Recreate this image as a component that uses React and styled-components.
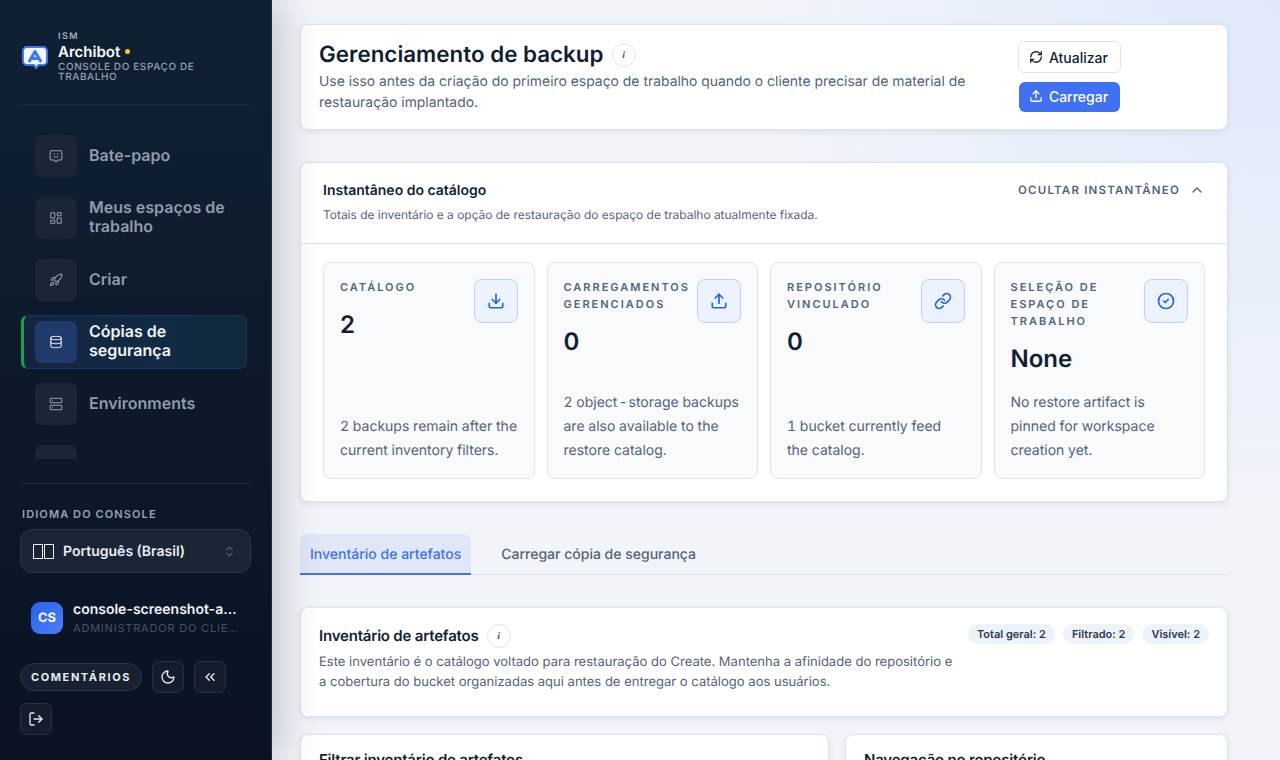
import styled, { createGlobalStyle } from "styled-components";
import {
  LayoutDashboard,
  Rocket,
  Database,
  Server,
  ChevronsUpDown,
  ChevronsLeft,
  ChevronUp,
  Moon,
  LogOut,
  RefreshCw,
  Upload,
  Download,
  Link,
  CircleCheck,
} from "lucide-react";

const GlobalStyle = createGlobalStyle`
  html, body {
    margin: 0;
    height: 100%;
    overflow: hidden;
    font-family: Inter, "Liberation Sans", sans-serif;
    text-rendering: geometricPrecision;
  }
  * { box-sizing: border-box; }
`;

const ChatIcon = () => (
  <svg width="14" height="14" viewBox="0 0 24 24" fill="none" stroke="currentColor" strokeWidth="1.75" strokeLinecap="round" strokeLinejoin="round">
    <path d="M4 3h16a2 2 0 0 1 2 2v12a2 2 0 0 1-2 2h-5l-3 3-3-3H4a2 2 0 0 1-2-2V5a2 2 0 0 1 2-2z" />
    <path d="M9 8v1M15 8v1M9 13c1.500 1.200 4.500 1.200 6 0" />
  </svg>
);

const NAV = [
  { label: "Bate-papo", icon: ChatIcon },
  { label: "Meus espaços de trabalho", icon: LayoutDashboard },
  { label: "Criar", icon: Rocket },
  { label: "Cópias de segurança", icon: Database, active: true },
  { label: "Environments", icon: Server },
  { label: "Observabilidade", icon: Server },
];

const Hyphen = styled.span`
  margin: 0 1px;
`;

const STATS = [
  { label: "Catálogo", value: "2", text: "2 backups remain after the current inventory filters.", icon: Download },
  {
    label: "Carregamentos gerenciados",
    value: "0",
    text: (
      <>
        2 object<Hyphen>-</Hyphen>storage backups are also available to the restore catalog.
      </>
    ),
    icon: Upload,
  },
  { label: "Repositório vinculado", value: "0", text: "1 bucket currently feed the catalog.", icon: Link },
  { label: "Seleção de espaço de trabalho", value: "None", text: "No restore artifact is pinned for workspace creation yet.", icon: CircleCheck },
];

const Logo = () => (
  <svg width="28" height="26" viewBox="0 0 28 26">
    <path d="M6 3h16a4 4 0 0 1 4 4v10a4 4 0 0 1-4 4h-4.500l-2.500 3-2-3H6a4 4 0 0 1-4-4V7a4 4 0 0 1 4-4z" fill="#f2f6ff" stroke="#3f78f6" strokeWidth="2" />
    <path d="M8.500 17 14 7.500l5.500 9.500M10.500 14.500h7" fill="none" stroke="#3f78f6" strokeWidth="3" strokeLinecap="round" strokeLinejoin="round" />
  </svg>
);

export default function App() {
  return (
    <Shell>
      <GlobalStyle />
      <Sidebar>
        <Brand>
          <Logo />
          <BrandText>
            <BrandKicker>ISM</BrandKicker>
            <BrandName>
              Archibot <BrandDot />
            </BrandName>
            <BrandSub>Console do espaço de trabalho</BrandSub>
          </BrandText>
        </Brand>
        <Nav>
          {NAV.map(({ label, icon: Icon, active }) => (
            <NavItem key={label} $active={active}>
              <NavIcon $active={active}>
                <Icon size={14} strokeWidth={1.75} />
              </NavIcon>
              <NavLabel $active={active}>{label}</NavLabel>
            </NavItem>
          ))}
        </Nav>
        <SideFooter>
          <LangLabel>Idioma do console</LangLabel>
          <LangSelect>
            <Tofu>
              <i />
              <i />
            </Tofu>
            <LangName>Português (Brasil)</LangName>
            <ChevronsUpDown size={13} color="#566479" />
          </LangSelect>
          <UserRow>
            <Avatar>CS</Avatar>
            <UserText>
              <UserName>console-screenshot-admin</UserName>
              <UserRole>Administrador do cliente</UserRole>
            </UserText>
          </UserRow>
          <FooterActions>
            <FeedbackButton>Comentários</FeedbackButton>
            <SquareButton>
              <Moon size={16} />
            </SquareButton>
            <SquareButton>
              <ChevronsLeft size={16} />
            </SquareButton>
            <SquareButton>
              <LogOut size={16} />
            </SquareButton>
          </FooterActions>
        </SideFooter>
      </Sidebar>
      <Main>
        <HeaderCard>
          <HeaderText>
            <TitleRow>
              <PageTitle>Gerenciamento de backup</PageTitle>
              <InfoBadge>i</InfoBadge>
            </TitleRow>
            <PageSub>
              Use isso antes da criação do primeiro espaço de trabalho quando o cliente precisar de material de
              restauração implantado.
            </PageSub>
          </HeaderText>
          <HeaderActions>
            <GhostButton>
              <RefreshCw size={14} strokeWidth={2.25} />
              Atualizar
            </GhostButton>
            <PrimaryButton>
              <Upload size={14} strokeWidth={2.25} />
              Carregar
            </PrimaryButton>
          </HeaderActions>
        </HeaderCard>

        <SnapshotCard>
          <SnapshotHead>
            <div>
              <SnapshotTitle>Instantâneo do catálogo</SnapshotTitle>
              <SnapshotSub>Totais de inventário e a opção de restauração do espaço de trabalho atualmente fixada.</SnapshotSub>
            </div>
            <Collapse>
              Ocultar instantâneo
              <ChevronUp size={16} />
            </Collapse>
          </SnapshotHead>
          <StatGrid>
            {STATS.map(({ label, value, text, icon: Icon }) => (
              <StatCard key={label}>
                <StatTop>
                  <StatLabel>{label}</StatLabel>
                  <StatValue>{value}</StatValue>
                  <StatIcon>
                    <Icon size={18} strokeWidth={2.25} />
                  </StatIcon>
                </StatTop>
                <StatText>{text}</StatText>
              </StatCard>
            ))}
          </StatGrid>
        </SnapshotCard>

        <Tabs>
          <Tab $active>Inventário de artefatos</Tab>
          <Tab>Carregar cópia de segurança</Tab>
        </Tabs>

        <InventoryCard>
          <div>
            <TitleRow>
              <SectionTitle>Inventário de artefatos</SectionTitle>
              <InfoBadge>i</InfoBadge>
            </TitleRow>
            <SectionSub>
              Este inventário é o catálogo voltado para restauração do Create. Mantenha a afinidade do repositório e a
              cobertura do bucket organizadas aqui antes de entregar o catálogo aos usuários.
            </SectionSub>
          </div>
          <Chips>
            <Chip>Total geral: 2</Chip>
            <Chip>Filtrado: 2</Chip>
            <Chip>Visível: 2</Chip>
          </Chips>
        </InventoryCard>

        <BottomGrid>
          <BottomCard>
            <BottomTitle>Filtrar inventário de artefatos</BottomTitle>
          </BottomCard>
          <BottomCard>
            <BottomTitle>Navegação no repositório</BottomTitle>
          </BottomCard>
        </BottomGrid>
      </Main>
    </Shell>
  );
}

const Shell = styled.div`
  display: flex;
  height: 760px;
  overflow: hidden;
  background:
    radial-gradient(circle at 100% 0, #dfe9fb 0, rgba(223, 233, 251, 0) 520px),
    #f1f4f9;
`;

const Sidebar = styled.aside`
  position: relative;
  z-index: 2;
  flex: 0 0 272px;
  width: 272px;
  min-width: 0;
  height: 760px;
  display: flex;
  flex-direction: column;
  padding: 0 20px;
  background: linear-gradient(180deg, #102034 0%, #0d192a 55%, #091322 100%);
  border-right: 1px solid #1e2d42;
  box-shadow: 6px 0 40px rgba(15, 23, 42, 0.24);
`;

const Brand = styled.div`
  display: flex;
  align-items: center;
  gap: 9px;
  height: 105px;
  padding: 9px 0 0 1px;
  border-bottom: 1px solid #1e2b3e;
`;

const BrandText = styled.div`
  display: flex;
  flex-direction: column;
`;

const BrandKicker = styled.span`
  font-size: 9px;
  line-height: 11px;
  font-weight: 600;
  letter-spacing: 1.4px;
  color: #a3aebd;
`;

const BrandName = styled.span`
  font-size: 15px;
  line-height: 19px;
  font-weight: 600;
  color: #fff;
`;

const BrandDot = styled.i`
  display: inline-block;
  width: 5px;
  height: 5px;
  margin: 0 0 2px 1px;
  border-radius: 50%;
  background: #facc15;
  vertical-align: middle;
`;

const BrandSub = styled.span`
  margin-top: 1px;
  font-size: 10px;
  line-height: 10px;
  font-weight: 500;
  letter-spacing: 0.6px;
  text-transform: uppercase;
  color: #94a1b2;
  width: 170px;
`;

const Nav = styled.nav`
  height: 354px;
  overflow: hidden;
  padding: 30px 4px 0 0;
  display: flex;
  flex-direction: column;
  gap: 20px;
`;

const NavItem = styled.div`
  display: flex;
  align-items: center;
  flex: none;
  gap: 12px;
  min-height: 42px;
  padding: ${(p) => (p.$active ? "5px 10px 5px 11px" : "0 10px 0 15px")};
  border-radius: 7px;
  ${(p) =>
    p.$active &&
    `
    margin: -6px 0 -6px 1px;
    background: linear-gradient(90deg, #15243f 0%, #122a44 60%, #10283a 100%);
    border: 1px solid #1c3560;
    border-left: 3px solid #16a34a;
  `}
`;

const NavIcon = styled.span`
  flex: none;
  width: 42px;
  height: 42px;
  display: flex;
  align-items: center;
  justify-content: center;
  border-radius: 7px;
  color: ${(p) => (p.$active ? "#e7edf7" : "#94a1b3")};
  background: ${(p) => (p.$active ? "#1f3a6b" : "#1a2636")};
`;

const NavLabel = styled.span`
  position: relative;
  top: -1px;
  font-size: 16px;
  line-height: 19px;
  font-weight: 600;
  color: ${(p) => (p.$active ? "#f1f5f9" : "#8f9cae")};
`;

const SideFooter = styled.div`
  border-top: 1px solid #1e2b3e;
  margin-top: 24px;
  padding-top: 24px;
`;

const LangLabel = styled.div`
  margin-left: 2px;
  font-size: 11px;
  line-height: 13px;
  font-weight: 600;
  letter-spacing: 1.1px;
  text-transform: uppercase;
  color: #98a4b5;
`;

const LangSelect = styled.div`
  display: flex;
  align-items: center;
  height: 44px;
  margin-top: 8px;
  padding: 0 14px 0 12px;
  background: #192434;
  border: 1px solid #2b3749;
  border-radius: 12px;
`;

const Tofu = styled.span`
  display: flex;
  gap: 1px;
  margin-right: 9px;
  i {
    display: block;
    width: 10px;
    height: 15px;
    border: 1px solid #e8edf4;
  }
`;

const LangName = styled.span`
  flex: 1;
  font-size: 14px;
  font-weight: 600;
  color: #e8edf4;
`;

const UserRow = styled.div`
  display: flex;
  align-items: center;
  gap: 10px;
  margin-top: 28px;
  padding: 0 10px 0 11px;
`;

const Avatar = styled.div`
  flex: none;
  width: 32px;
  height: 32px;
  display: flex;
  align-items: center;
  justify-content: center;
  border-radius: 9px;
  font-size: 13px;
  font-weight: 700;
  color: #fff;
  background: linear-gradient(135deg, #2563eb, #4f7dfb);
`;

const UserText = styled.div`
  min-width: 0;
  flex: 1;
`;

const UserName = styled.div`
  font-size: 14px;
  line-height: 18px;
  font-weight: 600;
  color: #eef2f7;
  white-space: nowrap;
  overflow: hidden;
  text-overflow: ellipsis;
`;

const UserRole = styled.div`
  margin-top: 2px;
  font-size: 11px;
  line-height: 14px;
  letter-spacing: 0.8px;
  text-transform: uppercase;
  color: #465367;
  white-space: nowrap;
  overflow: hidden;
  text-overflow: ellipsis;
`;

const FooterActions = styled.div`
  display: flex;
  flex-wrap: wrap;
  align-items: center;
  gap: 10px;
  margin-top: 26px;
`;

const FeedbackButton = styled.button`
  width: 122px;
  height: 28px;
  padding: 0;
  font: 700 11px Inter, sans-serif;
  letter-spacing: 1.6px;
  text-transform: uppercase;
  color: #e6ebf2;
  background: #172230;
  border: 1px solid #2b3749;
  border-radius: 14px;
`;

const SquareButton = styled.button`
  width: 32px;
  height: 32px;
  display: flex;
  align-items: center;
  justify-content: center;
  padding: 0;
  color: #e6ebf2;
  background: #131d2b;
  border: 1px solid #273345;
  border-radius: 7px;
`;

const Main = styled.main`
  flex: 1;
  min-width: 0;
  height: 760px;
  overflow: hidden;
  padding: 24px 52px 0 28px;
`;

const Card = styled.section`
  background: #fff;
  border: 1px solid #dde4f0;
  border-radius: 8px;
  box-shadow: 0 2px 6px rgba(15, 23, 42, 0.08);
`;

const HeaderCard = styled(Card)`
  display: flex;
  justify-content: space-between;
  height: 106px;
  padding: 16px 18px;
`;

const HeaderText = styled.div`
  width: 660px;
`;

const TitleRow = styled.div`
  display: flex;
  align-items: center;
  gap: 8px;
`;

const PageTitle = styled.h1`
  margin: 0;
  font-size: 22.400px;
  line-height: 28px;
  font-weight: 600;
  color: #111f33;
`;

const InfoBadge = styled.span`
  width: 24px;
  height: 24px;
  display: flex;
  align-items: center;
  justify-content: center;
  border: 1px solid #dde4f0;
  border-radius: 50%;
  background: #fff;
  font: italic 600 10px "Liberation Serif", serif;
  color: #475569;
`;

const PageSub = styled.p`
  margin: 3px 0 0;
  font-size: 13.920px;
  line-height: 21px;
  color: #55637a;
`;

const HeaderActions = styled.div`
  display: flex;
  flex-direction: column;
  align-items: center;
  gap: 9px;
  margin-right: 88px;
`;

const GhostButton = styled.button`
  display: flex;
  align-items: center;
  justify-content: center;
  gap: 6px;
  width: 103px;
  height: 32px;
  padding: 0 2px 0 0;
  font: 500 14px Inter, sans-serif;
  color: #111f33;
  background: #fff;
  border: 1px solid #dde4f0;
  border-radius: 6px;
`;

const PrimaryButton = styled(GhostButton)`
  width: 101px;
  height: 30px;
  padding-bottom: 2px;
  color: #fff;
  background: #4071f4;
  border: 0;
`;

const SnapshotCard = styled(Card)`
  margin-top: 32px;
  height: 340px;
`;

const SnapshotHead = styled.div`
  display: flex;
  justify-content: space-between;
  height: 81px;
  padding: 19px 22px;
  border-bottom: 1px solid #dde2ea;
`;

const SnapshotTitle = styled.h2`
  margin: 0;
  font-size: 14px;
  line-height: 18px;
  font-weight: 600;
  color: #111f33;
`;

const SnapshotSub = styled.p`
  margin: 7px 0 0;
  font-size: 11.950px;
  line-height: 15px;
  color: #55637a;
`;

const Collapse = styled.div`
  display: flex;
  align-items: flex-start;
  gap: 9px;
  height: 16px;
  font-size: 11.500px;
  line-height: 16px;
  font-weight: 600;
  letter-spacing: 1.2px;
  text-transform: uppercase;
  color: #55637a;
`;

const StatGrid = styled.div`
  display: grid;
  grid-template-columns: repeat(4, 1fr);
  gap: 12px;
  padding: 18px 22px;
`;

const StatCard = styled.div`
  display: flex;
  flex-direction: column;
  justify-content: space-between;
  height: 217px;
  padding: 16px 16px 15px;
  background: #f8fafc;
  border: 1px solid #dde4f0;
  border-radius: 8px;
`;

const StatTop = styled.div`
  position: relative;
`;

const StatLabel = styled.div`
  padding-right: 40px;
  font-size: 11px;
  line-height: 17px;
  font-weight: 600;
  letter-spacing: 2px;
  text-transform: uppercase;
  color: #55637a;
`;

const StatValue = styled.div`
  margin-top: 13px;
  font-size: 24px;
  line-height: 31px;
  font-weight: 600;
  color: #111f33;
`;

const StatIcon = styled.span`
  position: absolute;
  top: 0;
  right: 0;
  width: 44px;
  height: 44px;
  display: flex;
  align-items: center;
  justify-content: center;
  color: #2563eb;
  background: #edf3fe;
  border: 1px solid #bcd0f6;
  border-radius: 8px;
`;

const StatText = styled.p`
  margin: 0;
  font-size: 14px;
  line-height: 24px;
  font-variant-numeric: tabular-nums;
  color: #55637a;
`;

const Tabs = styled.div`
  display: flex;
  margin-top: 32px;
  border-bottom: 1px solid #dde2ea;
`;

const Tab = styled.div`
  height: 41px;
  padding: 0 ${(p) => (p.$active ? "10px" : "30px")};
  font-size: 14px;
  line-height: 41px;
  font-weight: 500;
  color: ${(p) => (p.$active ? "#4071f4" : "#55637a")};
  background: ${(p) => (p.$active ? "#dfe7f8" : "transparent")};
  border-bottom: 2px solid ${(p) => (p.$active ? "#4071f4" : "transparent")};
  border-radius: 6px 6px 0 0;
  margin-bottom: -1px;
`;

const InventoryCard = styled(Card)`
  display: flex;
  justify-content: space-between;
  height: 110px;
  margin-top: 32px;
  padding: 16px 18px;
`;

const SectionTitle = styled.h2`
  margin: 0;
  font-size: 15px;
  line-height: 24px;
  font-weight: 600;
  letter-spacing: -0.2px;
  color: #111f33;
`;

const SectionSub = styled.p`
  width: 640px;
  margin: 4px 0 0;
  font-size: 13.040px;
  line-height: 20px;
  color: #55637a;
`;

const Chips = styled.div`
  display: flex;
  gap: 8px;
`;

const Chip = styled.span`
  height: 20px;
  padding: 0 9px;
  font-size: 11px;
  line-height: 20px;
  font-weight: 600;
  white-space: nowrap;
  color: #2b3a50;
  background: #eef2fb;
  border-radius: 10px;
`;

const BottomGrid = styled.div`
  display: grid;
  grid-template-columns: 529px 383px;
  gap: 16px;
  margin-top: 17px;
`;

const BottomCard = styled(Card)`
  height: 120px;
  padding: 13px 18px;
`;

const BottomTitle = styled.h3`
  margin: 0;
  font-size: 15px;
  line-height: 24px;
  font-weight: 600;
  letter-spacing: -0.2px;
  color: #111f33;
`;
